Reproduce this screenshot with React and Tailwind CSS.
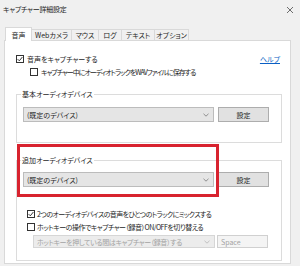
import React from "react";

const TABS = [
  { label: "音声", w: "w-[27px]", active: true },
  { label: "Webカメラ", w: "w-[40px]" },
  { label: "マウス", w: "w-[27px]" },
  { label: "ログ", w: "w-[23px]" },
  { label: "テキスト", w: "w-[33px]" },
  { label: "オプション", w: "w-[34px]" },
];

function Check({ checked }) {
  return (
    <span className="flex w-[8px] h-[8px] shrink-0 items-center justify-center border border-[#333] bg-white">
      {checked && (
        <svg width="6" height="6" viewBox="0 0 6 6">
          <path d="M0.6 3.1 L2.3 4.8 L5.4 1" fill="none" stroke="#222" strokeWidth="0.9" />
        </svg>
      )}
    </span>
  );
}

function Chevron({ color = "#777" }) {
  return (
    <svg width="6" height="4" viewBox="0 0 6 4" className="ml-auto mr-[4px] shrink-0">
      <path d="M0.5 0.8 L3 3.2 L5.5 0.8" fill="none" stroke={color} strokeWidth="0.8" />
    </svg>
  );
}

function DeviceRow({ mt }) {
  return (
    <div className={`flex ${mt}`}>
      <div className="flex items-center w-[191px] h-[15px] bg-[#e5e5e5] border border-[#bcbcbc] pl-[3px]">
        <span>(既定のデバイス)</span>
        <Chevron />
      </div>
      <div className="ml-[4px] w-[51px] h-[15px] flex items-center justify-center bg-[#e1e1e1] border border-[#adadad]">
        設定
      </div>
    </div>
  );
}

export default function App() {
  return (
    <div className="w-[300px] h-[266px] overflow-hidden bg-[#f0f0f0] text-[#1e1e1e] text-[7px] leading-[10px] font-['Noto_Sans_CJK_JP',sans-serif] [font-feature-settings:'palt']">
      {/* title bar */}
      <div className="h-[27px] flex items-start justify-between">
        <div className="pt-[4px] pl-[3px] tracking-[-0.2px]">キャプチャー詳細設定</div>
        <svg width="6" height="6" viewBox="0 0 6 6" className="mt-[7px] mr-[7px]">
          <path d="M0 0 L6 6 M6 0 L0 6" stroke="#333" strokeWidth="0.7" />
        </svg>
      </div>

      {/* tabs */}
      <div className="flex items-end h-[13px] pl-[5px]">
        {TABS.map((tab) =>
          tab.active ? (
            <div
              key={tab.label}
              className={`${tab.w} h-[14px] -mb-[1px] relative z-10 flex items-center justify-center bg-white border border-b-0 border-[#d9d9d9]`}
            >
              {tab.label}
            </div>
          ) : (
            <div
              key={tab.label}
              className={`${tab.w} h-[11px] flex items-center justify-center bg-[#f0f0f0] border-t border-r border-[#d9d9d9]`}
            >
              {tab.label}
            </div>
          )
        )}
      </div>

      {/* panel */}
      <div className="relative ml-[4px] w-[287px] h-[224px] bg-white border border-[#d9d9d9]">
        <div className="mt-[13px] h-[10px] flex items-center pl-[11px] pr-[10px]">
          <Check checked />
          <span className="ml-[3px]">音声をキャプチャーする</span>
          <span className="ml-auto text-[#0a5fc4] underline">ヘルプ</span>
        </div>
        <div className="mt-[3px] h-[10px] flex items-center pl-[25px]">
          <Check />
          <span className="ml-[3px] tracking-[-1px]">キャプチャー中にオーディオトラックをWAVファイルに保存する</span>
        </div>

        <fieldset className="mt-[12px] ml-[11px] mr-[8px] border border-[#dcdcdc] px-[6px] pb-[20px]">
          <legend className="-ml-[2px] px-[1px]">基本オーディオデバイス</legend>
          <DeviceRow mt="mt-[8px]" />
        </fieldset>

        <fieldset className="mt-[12px] ml-[11px] mr-[8px] border border-[#dcdcdc] px-[6px] pb-[12px]">
          <legend className="-ml-[2px] px-[1px]">追加オーディオデバイス</legend>
          <DeviceRow mt="mt-[7px]" />
          <div className="mt-[22px] h-[10px] flex items-center ml-[4px]">
            <Check checked />
            <span className="ml-[2px] tracking-[-0.6px]">2つのオーディオデバイスの音声をひとつのトラックにミックスする</span>
          </div>
          <div className="mt-[3px] h-[10px] flex items-center ml-[4px]">
            <Check />
            <span className="ml-[2px] tracking-[-0.5px]">ホットキーの操作でキャプチャー（録音）ON/OFFを切り替える</span>
          </div>
          <div className="mt-[3px] flex ml-[10px]">
            <div className="flex items-center w-[182px] h-[13px] bg-[#ececec] border border-[#d6d6d6] pl-[3px] text-[#a3a3a3]">
              <span className="tracking-[-0.4px]">ホットキーを押している間はキャプチャー（録音）する</span>
              <Chevron color="#b5b5b5" />
            </div>
            <div className="ml-[2px] w-[51px] h-[13px] flex items-center pl-[3px] bg-[#f4f4f4] border border-[#d0d0d0] text-[#a3a3a3]">
              Space
            </div>
          </div>
        </fieldset>

        {/* red highlight annotation */}
        <div className="absolute left-[12px] top-[103px] w-[202px] h-[53px] border-[3px] border-[#d8232f] pointer-events-none" />
      </div>
    </div>
  );
}
